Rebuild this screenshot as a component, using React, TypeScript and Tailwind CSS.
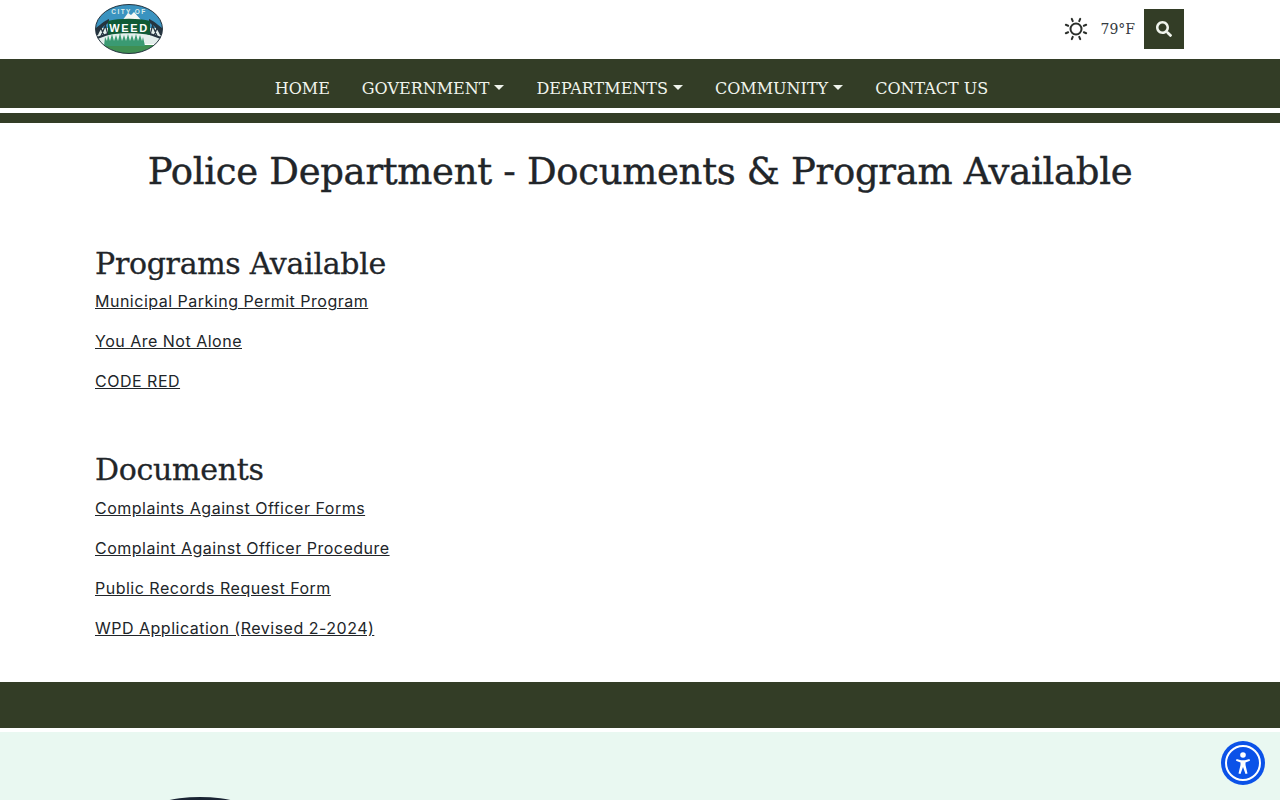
import React from 'react';
import { FaSearch } from 'react-icons/fa';

const navItems = [
  { label: 'HOME', caret: false },
  { label: 'GOVERNMENT', caret: true },
  { label: 'DEPARTMENTS', caret: true },
  { label: 'COMMUNITY', caret: true },
  { label: 'CONTACT US', caret: false },
];

const programs = ['Municipal Parking Permit Program', 'You Are Not Alone', 'CODE RED'];
const documents = [
  'Complaints Against Officer Forms',
  'Complaint Against Officer Procedure',
  'Public Records Request Form',
  'WPD Application (Revised 2-2024)',
];

const Logo = () => (
  <svg viewBox="0 0 68 50" className="h-[50px] w-[68px]">
    <defs>
      <clipPath id="oval"><ellipse cx="34" cy="25" rx="33.5" ry="24.5" /></clipPath>
    </defs>
    <g clipPath="url(#oval)">
      <rect width="68" height="24" fill="#3a93c0" />
      <rect y="24" width="68" height="16" fill="#e4efec" />
      <rect y="41" width="68" height="9" fill="#3f8f52" />
      <path d="M27 17l6-8 3 2 3-3 8 9z" fill="#f4f7f4" />
      <path d="M9 42l1-9 2 4 1-6 2 6 2-7 2 7 2-6 2 6 2-8 2 8 2-6 2 6 2-7 2 7 2-6 2 6 2-7 2 7 2-6 2 6 1-4 2 9z" fill="#3a9a72" />
      <path d="M1 24C7 19 11 16 14 15V19C10 20 6 24 3 31H0ZM67 24C61 19 57 16 54 15V19C58 20 62 24 65 31H68Z" fill="#25343f" />
      <path d="M2 34C10 31 13 30 16 29M66 34C58 31 55 30 52 29" fill="none" stroke="#25343f" strokeWidth="2.2" />
      <path d="M6 24l3 8M10 20l3 11M6 32l5-12M62 24l-3 8M58 20l-3 11M62 32l-5-12" stroke="#25343f" strokeWidth="1.2" />
      <path d="M13 17C24 14 44 14 55 17V31C44 28.500 24 28.500 13 31Z" fill="#0f5a35" />
    </g>
    <ellipse cx="34" cy="25" rx="33.500" ry="24.500" fill="none" stroke="#25343f" strokeWidth="1" />
    <text x="34" y="9.500" textAnchor="middle" fontSize="6.500" fontWeight="700" letterSpacing="1.4" fill="#dcecea" fontFamily="'Liberation Sans', sans-serif">CITY OF</text>
    <text x="34" y="28" textAnchor="middle" fontSize="11" fontWeight="700" letterSpacing="1.6" fill="#fff" fontFamily="'Liberation Sans', sans-serif">WEED</text>
  </svg>
);

const SunIcon = () => (
  <svg viewBox="0 0 24 24" className="h-6 w-6 text-[#2b2f2b]" fill="none" stroke="currentColor" strokeWidth="2" strokeLinecap="round">
    <circle cx="12" cy="12" r="5.5" />
    <g transform="rotate(22.5 12 12)">
      <path d="M12 1v2.500M12 20.500V23M1 12h2.500M20.500 12H23M4.200 4.200l1.800 1.800M18 18l1.800 1.800M4.200 19.800L6 18M18 6l1.800-1.800" />
    </g>
  </svg>
);

const AccessibilityIcon = () => (
  <svg viewBox="0 0 14 22" className="h-[22px] w-[14px]" fill="#fff">
    <circle cx="7" cy="3" r="2.800" />
    <path d="M.6 7l4.400 1.300h4L13.400 7l.6 1.800-4.500 1.700V13l2 8.500-2 .5L7 15l-2.500 7-2-.5 2-8.500v-2.500L0 8.800z" />
  </svg>
);

const LinkSection = ({ title, links, gap }: { title: string; links: string[]; gap: string }) => (
  <section>
    <h2 className={`font-['DejaVu_Serif',serif] text-[30px] leading-[38px] tracking-[-0.3px] [-webkit-text-stroke:0.3px_#212529] text-[#212529] ${gap}`}>{title}</h2>
    {links.map((link) => (
      <p key={link} className="mb-4 h-6 leading-6">
        <a href="#" className="underline text-[#212529]">{link}</a>
      </p>
    ))}
  </section>
);

export default function App() {
  return (
    <div className="h-[800px] overflow-hidden bg-white font-['Inter',sans-serif] text-base tracking-[0.5px] text-[#212529] relative">
      <header className="h-[59px] pl-[95px] pr-[96px] pb-px flex items-center justify-between">
        <Logo />
        <div className="flex items-center">
          <SunIcon />
          <span className="ml-[12px] mr-[9px] font-['DejaVu_Serif',serif] text-[14px] tracking-normal text-[#343a40]">79°F</span>
          <button className="h-10 w-10 bg-[#333d26] flex items-center justify-center">
            <FaSearch className="h-4 w-4 text-[#f0f4ec]" />
          </button>
        </div>
      </header>

      <nav className="h-[49px] bg-[#333d26] flex justify-center items-center gap-[32px] pt-[11px] pr-[17px] font-['DejaVu_Serif',serif] text-[16px] tracking-normal text-[#f0f4ec]">
        {navItems.map((item) => (
          <a key={item.label} href="#" className="flex items-center">
            {item.label}
            {item.caret && <span className="ml-[5px] mb-[3px] border-x-[5px] border-t-[5px] border-x-transparent border-t-current" />}
          </a>
        ))}
      </nav>
      <div className="h-[10px] mt-[5px] bg-[#333d26]" />

      <main className="px-[95px]">
        <h1 className="mt-[25px] text-center font-['DejaVu_Serif',serif] text-[37px] leading-[48px] tracking-[-0.3px] [-webkit-text-stroke:0.4px_#212529] text-[#212529]">
          Police Department - Documents &amp; Program Available
        </h1>
        <div className="mt-[49px]">
          <LinkSection title="Programs Available" links={programs} gap="mb-[6px]" />
        </div>
        <div className="mt-[58px]">
          <LinkSection title="Documents" links={documents} gap="mb-[7px]" />
        </div>
      </main>

      <div className="h-[46px] mt-[42px] bg-[#333d26]" />
      <footer className="h-[100px] mt-1 bg-[#e9f8f1] pt-[65px] px-[95px]">
        <div className="h-[140px] w-[210px] rounded-[50%] bg-[#1a2433]" />
      </footer>

      <button className="absolute left-[1221px] top-[741px] h-11 w-11 rounded-full bg-[#0b52e8] flex items-center justify-center">
        <span className="h-[36px] w-[36px] rounded-full border-2 border-white flex items-center justify-center">
          <AccessibilityIcon />
        </span>
      </button>
    </div>
  );
}
